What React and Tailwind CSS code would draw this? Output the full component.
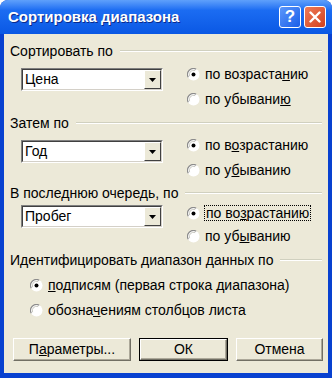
import React from "react";

const font = { fontFamily: '"Liberation Sans", Arial, sans-serif' };

const Radio = ({ checked }) => (
  <svg width="13" height="13" viewBox="0 0 13 13" className="shrink-0">
    <circle cx="6.5" cy="6.5" r="6" fill="#ffffff" />
    <path d="M1.3 9.2 A5.8 5.8 0 0 1 9.2 1.3" fill="none" stroke="#8c8c8c" strokeWidth="1.2" />
    <path d="M2.6 8.2 A4.3 4.3 0 0 1 8.2 2.6" fill="none" stroke="#c9c9c2" strokeWidth="1" />
    {checked && <circle cx="6.5" cy="6.5" r="2" fill="#000000" />}
  </svg>
);

const RadioRow = ({ checked, children, focus }) => (
  <div className="flex items-center h-[16px] text-[14px] text-black">
    <Radio checked={checked} />
    <span
      className={
        focus
          ? "ml-[4px] px-[1px] leading-[14px] border border-dotted border-black"
          : "ml-[5px] leading-[16px]"
      }
    >
      {children}
    </span>
  </div>
);

const Header = ({ children, className }) => (
  <div className={"flex items-center h-[16px] " + (className || "")}>
    <span className="text-[14px] text-black leading-[16px] whitespace-nowrap">
      {children}
    </span>
    <div className="flex-1 ml-[7px] mr-[2px] border-t border-[#d0d0bf] border-b border-b-white" />
  </div>
);

const Combo = ({ value, className }) => (
  <div
    className={
      "w-[142px] h-[23px] flex border border-t-[#808080] border-l-[#808080] border-r-white border-b-white " +
      (className || "")
    }
  >
    <div className="flex-1 flex border border-t-[#404040] border-l-[#404040] border-r-[#d4d0c8] border-b-[#d4d0c8] bg-white">
      <span className="flex-1 pl-[2px] text-[14px] leading-[19px] text-black">{value}</span>
      <div className="w-[17px] h-[19px] bg-[#ece9d8] flex items-center justify-center border border-t-white border-l-white border-r-[#404040] border-b-[#404040]">
        <svg width="7" height="4" viewBox="0 0 7 4">
          <path d="M0 0 H7 L3.5 4 Z" fill="#000" />
        </svg>
      </div>
    </div>
  </div>
);

const Btn = ({ children, className, primary }) => (
  <div
    className={
      "h-[23px] flex " +
      (primary ? "border border-black " : "") +
      (className || "")
    }
  >
    <div className="flex-1 flex items-center justify-center bg-[#ece9d8] border border-t-white border-l-white border-r-[#716f64] border-b-[#716f64] shadow-[inset_-1px_-1px_0_#aca899] text-[14px] text-black">
      {children}
    </div>
  </div>
);

export default function App() {
  return (
    <div
      className="w-[332px] h-[378px] flex flex-col bg-[#0841d0] rounded-t-[8px] overflow-hidden"
      style={font}
    >
      {/* Title bar */}
      <div className="h-[34px] shrink-0 flex items-center pl-[8px] pr-[6px] bg-gradient-to-b from-[#5fa0fb] via-[#1b6cf2] via-30% to-[#0a58e4]">
        <span className="flex-1 text-white font-bold text-[15px] [text-shadow:1px_1px_0_#0b2a8a]">
          Сортировка диапазона
        </span>
        <div className="w-[22px] h-[22px] rounded-[3px] border border-white bg-gradient-to-br from-[#5b97fb] to-[#1a5de8] flex items-center justify-center text-white font-bold text-[17px]">
          ?
        </div>
        <div className="ml-[3px] w-[22px] h-[22px] rounded-[3px] border border-white bg-gradient-to-br from-[#ee7a56] to-[#d2401c] flex items-center justify-center">
          <svg width="12" height="12" viewBox="0 0 12 12">
            <path d="M1.5 1.5 L10.5 10.5 M10.5 1.5 L1.5 10.5" stroke="#fff" strokeWidth="2.4" strokeLinecap="round" />
          </svg>
        </div>
      </div>

      {/* Client area */}
      <div className="flex-1 mx-[4px] mb-[5px] bg-[#ece9d8] flex flex-col pl-[6px] pr-[4px]">
        <Header className="mt-[9px]">Сортировать по</Header>
        <div className="flex mt-[7px]">
          <Combo value="Цена" className="ml-[11px] mt-[2px]" />
          <div className="ml-[24px] flex flex-col gap-[9px]">
            <RadioRow checked>
              по возраста<u>н</u>ию
            </RadioRow>
            <RadioRow>
              по убывани<u>ю</u>
            </RadioRow>
          </div>
        </div>

        <Header className="mt-[8px]">Затем по</Header>
        <div className="flex mt-[6px]">
          <Combo value="Год" className="ml-[11px] mt-[3px]" />
          <div className="ml-[24px] flex flex-col gap-[9px]">
            <RadioRow checked>
              по в<u>о</u>зрастанию
            </RadioRow>
            <RadioRow>
              по у<u>б</u>ыванию
            </RadioRow>
          </div>
        </div>

        <Header className="mt-[7px]">В последнюю очередь, по</Header>
        <div className="flex mt-[4px]">
          <Combo value="Пробег" className="ml-[11px]" />
          <div className="ml-[24px] flex flex-col gap-[7px]">
            <RadioRow checked focus>
              по во<u>з</u>растанию
            </RadioRow>
            <RadioRow>
              по уб<u>ы</u>ванию
            </RadioRow>
          </div>
        </div>

        <Header className="mt-[8px]">Идентифицировать диапазон данных по</Header>
        <div className="flex flex-col gap-[9px] mt-[9px] ml-[20px]">
          <RadioRow checked>
            <u>п</u>одписям (первая строка диапазона)
          </RadioRow>
          <RadioRow>
            обозна<u>ч</u>ениям столбцов листа
          </RadioRow>
        </div>

        <div className="flex mt-[20px]">
          <Btn className="ml-[3px] w-[118px]">
            П<u>а</u>раметры...
          </Btn>
          <Btn primary className="ml-[8px] w-[89px]">
            ОК
          </Btn>
          <Btn className="ml-[8px] w-[87px]">Отмена</Btn>
        </div>
      </div>
    </div>
  );
}
